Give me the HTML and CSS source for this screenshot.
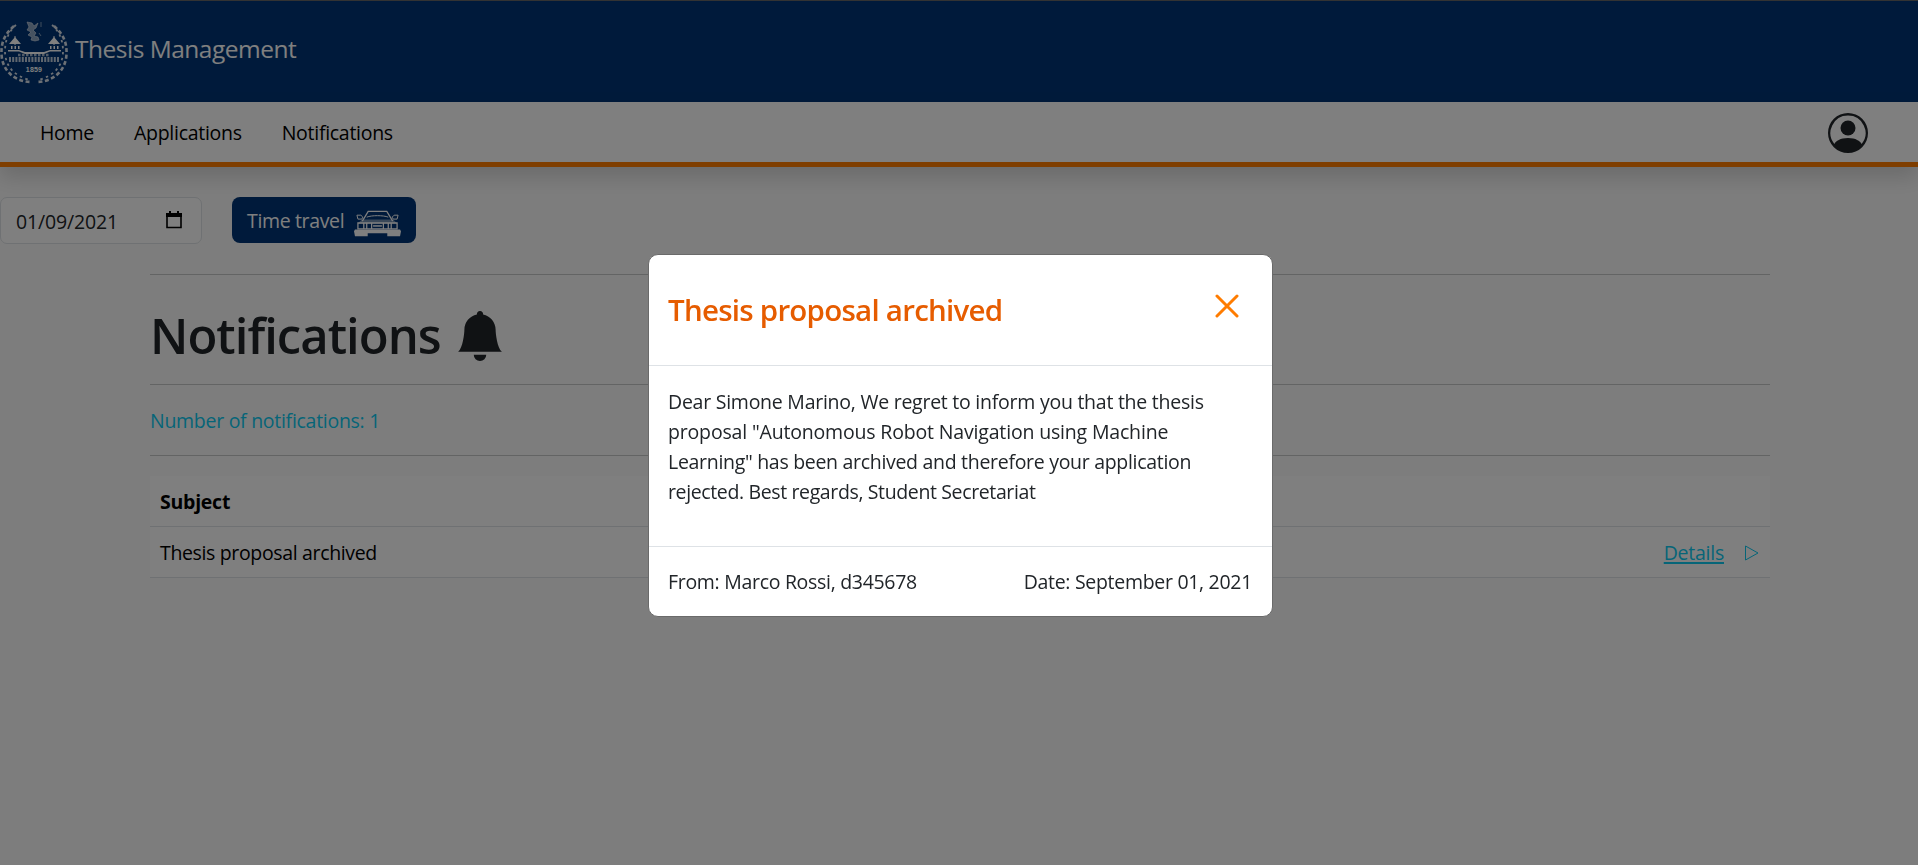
FILE: index.html
```html
<!DOCTYPE html>
<html lang="en">
<head>
<meta charset="utf-8">
<title>Thesis Management</title>
<link rel="stylesheet" href="styles.css">
</head>
<body>
<header class="brand">
  <svg class="logo" viewBox="0 0 68 66" fill="none" stroke="#fff">
    <g stroke-width="2.600" opacity=".85">
      <path d="M14 6C5 14 1 22 1.500 34C2 50 14 62 32 62" stroke-dasharray="4 2.500"/>
      <path d="M54 6C63 14 67 22 66.500 34C66 50 54 62 36 62" stroke-dasharray="4 2.500"/>
      <path d="M16 5C9 11 5 20 5 31C5 46 14 56 30 60" stroke-width="1.800" stroke-dasharray="2.500 3.500"/>
      <path d="M52 5C59 11 63 20 63 31C63 46 54 56 38 60" stroke-width="1.800" stroke-dasharray="2.500 3.500"/>
    </g>
    <path d="M27 2l5 1 2 3 4-3-2 5-3 2 3 3-2 3 4 1 1 3-4 1-4-1 1-3-4-2 3-3-4-2 2-3zM41 2v5M39 13l2 3" fill="#fff" fill-opacity=".65" stroke-width=".6" opacity=".85"/>
    <g fill="#fff" stroke="none">
      <path d="M9 24l6-7 6 7zM48 24l6-7 6 7z"/>
      <path d="M11 26h1.500v3H11zM14.500 26H16v3h-1.500zM18 26h1.500v3H18zM50 26h1.500v3H50zM53.500 26H55v3h-1.500zM57 26h1.500v3H57z"/>
      <path d="M8 30h11l6 2h19l6-2h11v1.500H50L44 34H25l-6-2.500H8z"/>
    </g>
    <path d="M9 39.500h50" stroke-width="5" stroke-dasharray="2 1.200" opacity=".75"/>
    <path d="M18 35h32" stroke-width="2.500" stroke-dasharray="2.500 1.500" opacity=".65"/>
    <path d="M15 25v-9M54 25v-9" stroke-width="1"/>
    <text class="year" x="34" y="52" text-anchor="middle">1859</text>
  </svg>
  <span class="brand-name">Thesis Management</span>
</header>
<nav class="nav">
  <a class="nav-link">Home</a>
  <a class="nav-link">Applications</a>
  <a class="nav-link">Notifications</a>
  <svg class="avatar" viewBox="0 0 16 16" fill="currentColor"><path d="M11 6a3 3 0 1 1-6 0 3 3 0 0 1 6 0z"/><path fill-rule="evenodd" d="M0 8a8 8 0 1 1 16 0A8 8 0 0 1 0 8zm8-7a7 7 0 0 0-5.468 11.370C3.242 11.226 4.805 10 8 10s4.757 1.225 5.468 2.370A7 7 0 0 0 8 1z"/></svg>
</nav>
<section class="tools">
  <div class="date"><span class="date-text">01/09/2021</span>
    <svg class="cal" viewBox="0 0 16 18"><path d="M1 4h14v12.500H1z" fill="none" stroke="#000" stroke-width="1.600"/><path d="M0 2h16v4H0zM3 0h2v3H3zM11 0h2v3h-2z" fill="#000"/></svg>
  </div>
  <button class="travel"><span class="travel-text">Time travel</span>
    <svg class="car" viewBox="0 0 48 27" fill="none" stroke="#fff" stroke-width="1.300">
      <path d="M8.500 11L14.500 1.200H33.500L39.500 11"/>
      <path d="M13 7c5-2 17-2 22 0" stroke-width="1"/>
      <path d="M3 5h4l2 2-1 2H4zM45 5h-4l-2 2 1 2h4z" stroke-width="1"/>
      <path d="M8 9.500h32l4 4H4z" fill="#fff" fill-opacity=".45" stroke="none"/>
      <path d="M4 13h40v6H4zM10 13v6M13 13v6M18 13v6M30 13v6M35 13v6M38 13v6" stroke-width="1.300"/>
      <path d="M19.500 16h9" stroke-width="1.500"/>
      <path d="M1 19.500h46l1 2-1 5H34v-3H14v3H1l-1-5z" fill="#fff" stroke="none"/>
    </svg>
  </button>
</section>
<main class="content">
  <h1 class="title"><span>Notifications</span>
    <svg class="bell" viewBox="0 0 16 16" fill="currentColor"><path d="M8 16a2 2 0 0 0 2-2H6a2 2 0 0 0 2 2zm.995-14.901a1 1 0 1 0-1.990 0A5.002 5.002 0 0 0 3 6c0 1.098-.5 6-2 7h14c-1.500-1-2-5.902-2-7 0-2.420-1.720-4.440-4.005-4.901z"/></svg>
  </h1>
  <p class="count"><span>Number of notifications: 1</span></p>
  <div class="table">
    <div class="row head"><span>Subject</span></div>
    <div class="row"><span class="subject">Thesis proposal archived</span>
      <a class="details">Details</a>
      <svg class="play" viewBox="0 0 16 16"><path d="M1.500 1v14L14 8z" fill="none" stroke="currentColor"/></svg>
    </div>
  </div>
</main>
<div class="backdrop">
  <div class="modal">
    <div class="modal-head"><h2 class="modal-title">Thesis proposal archived</h2>
      <svg class="close" viewBox="0 0 24 24"><path d="M2 2l20 20M22 2L2 22" stroke="#ff7c00" stroke-width="3" stroke-linecap="round"/></svg>
    </div>
    <div class="modal-body"><span>Dear Simone Marino, We regret to inform you that the thesis</span><br><span class="looser">proposal "Autonomous Robot Navigation using Machine</span><br><span class="tighter">Learning" has been archived and therefore your application</span><br><span class="tightest">rejected. Best regards, Student Secretariat</span></div>
    <div class="modal-foot"><span class="tighter">From: Marco Rossi, d345678</span><span class="tighter">Date: September 01, 2021</span></div>
  </div>
</div>
</body>
</html>
```
FILE: styles.css
```css
* { box-sizing: border-box; }
body { margin: 0; height: 865px; overflow: hidden; background: #fbfbfb; color: #212529; font: 400 19.5px/30px "Open Sans", "Noto Sans", sans-serif; letter-spacing: -.25px; }
.brand { display: flex; align-items: center; height: 102px; padding-bottom: 1px; border-top: 1px solid #666; background: #003576; color: #fff; }
.logo { width: 68px; height: 66px; margin-top: 3px; }
.year { font: 700 7px "Liberation Sans", sans-serif; fill: #fff; stroke: none; letter-spacing: .2px; }
.brand-name { margin: -4px 0 0 7px; font-size: 24.5px; letter-spacing: -.5px; }
.nav { position: relative; display: flex; align-items: center; height: 65px; padding: 0 50px 0 40px; border-bottom: 5px solid #ff7c00; background: #fff; color: #000; box-shadow: 0 10px 20px rgba(0,0,0,.15); }
.nav-link { margin-right: 40px; white-space: nowrap; padding-top: 1px; letter-spacing: -.28px; }
.avatar { width: 40px; height: 40px; margin: 1px 0 0 auto; color: #212529; }
.tools { display: flex; padding-top: 30px; gap: 30px; }
.date { display: flex; align-items: center; justify-content: space-between; width: 202px; height: 47px; padding: 2px 19px 0 15px; border: 1px solid #dee2e6; border-radius: 7px; background: #fff; }
.date-text { letter-spacing: -.15px; }
.cal { width: 16px; height: 18px; margin-top: -3px; }
.travel { display: flex; align-items: center; width: 184px; height: 46px; padding: 1px 15px 0; border: 0; border-radius: 8px; background: #003576; color: #fff; font: inherit; letter-spacing: -.35px; white-space: nowrap; }
.car { width: 47px; height: 27px; margin: 5px 0 0 auto; }
.content { width: 1620px; margin: 30px auto 0 150px; }
.title { display: flex; align-items: center; height: 110px; margin: 0; border-top: 1px solid #c7c8c9; font-size: 49px; font-weight: 600; line-height: 60px; letter-spacing: -.98px; padding-top: 11px; }
.bell { width: 50px; height: 50px; margin: 1px 0 0 14px; }
.count { display: flex; align-items: center; height: 72px; margin: 0; padding-top: 1px; border: solid #c7c8c9; border-width: 1px 0; color: #0dcaf0; letter-spacing: -.28px; }
.table { margin-top: 20px; background: #fff; color: #000; }
.row { display: flex; align-items: center; height: 51px; padding: 1px 10px 0; border-bottom: 1px solid #dee2e6; }
.head { font-weight: 700; }
.subject { letter-spacing: -.35px; }
.details { margin-left: auto; color: #0dcaf0; text-decoration: underline; text-decoration-thickness: 2px; text-underline-offset: 2px; }
.play { width: 16px; height: 16px; margin-left: 20px; color: #0dcaf0; }
.backdrop { position: fixed; inset: 0; background: rgba(0,0,0,.5); display: flex; justify-content: center; align-items: flex-start; padding: 254px 0 0 3px; }
.modal { width: 625px; height: 363px; border: 1px solid #6a6a6a; border-radius: 10px; background: #fff; overflow: hidden; }
.modal-head { display: flex; justify-content: space-between; height: 111px; padding: 36px 33px 0 19px; border-bottom: 1px solid #dee2e6; }
.modal-title { margin: 0; color: #e65c00; font-size: 29.5px; font-weight: 600; line-height: 38px; letter-spacing: -.75px; white-space: nowrap; }
.close { width: 24px; height: 24px; margin-top: 3px; }
.modal-body { height: 181px; padding: 21px 19px; border-bottom: 1px solid #dee2e6; white-space: nowrap; }
.modal-foot { display: flex; justify-content: space-between; padding: 20px 20px 0 19px; white-space: nowrap; }
.looser { letter-spacing: -.17px; }
.tighter { letter-spacing: -.3px; }
.tightest { letter-spacing: -.37px; }
```
